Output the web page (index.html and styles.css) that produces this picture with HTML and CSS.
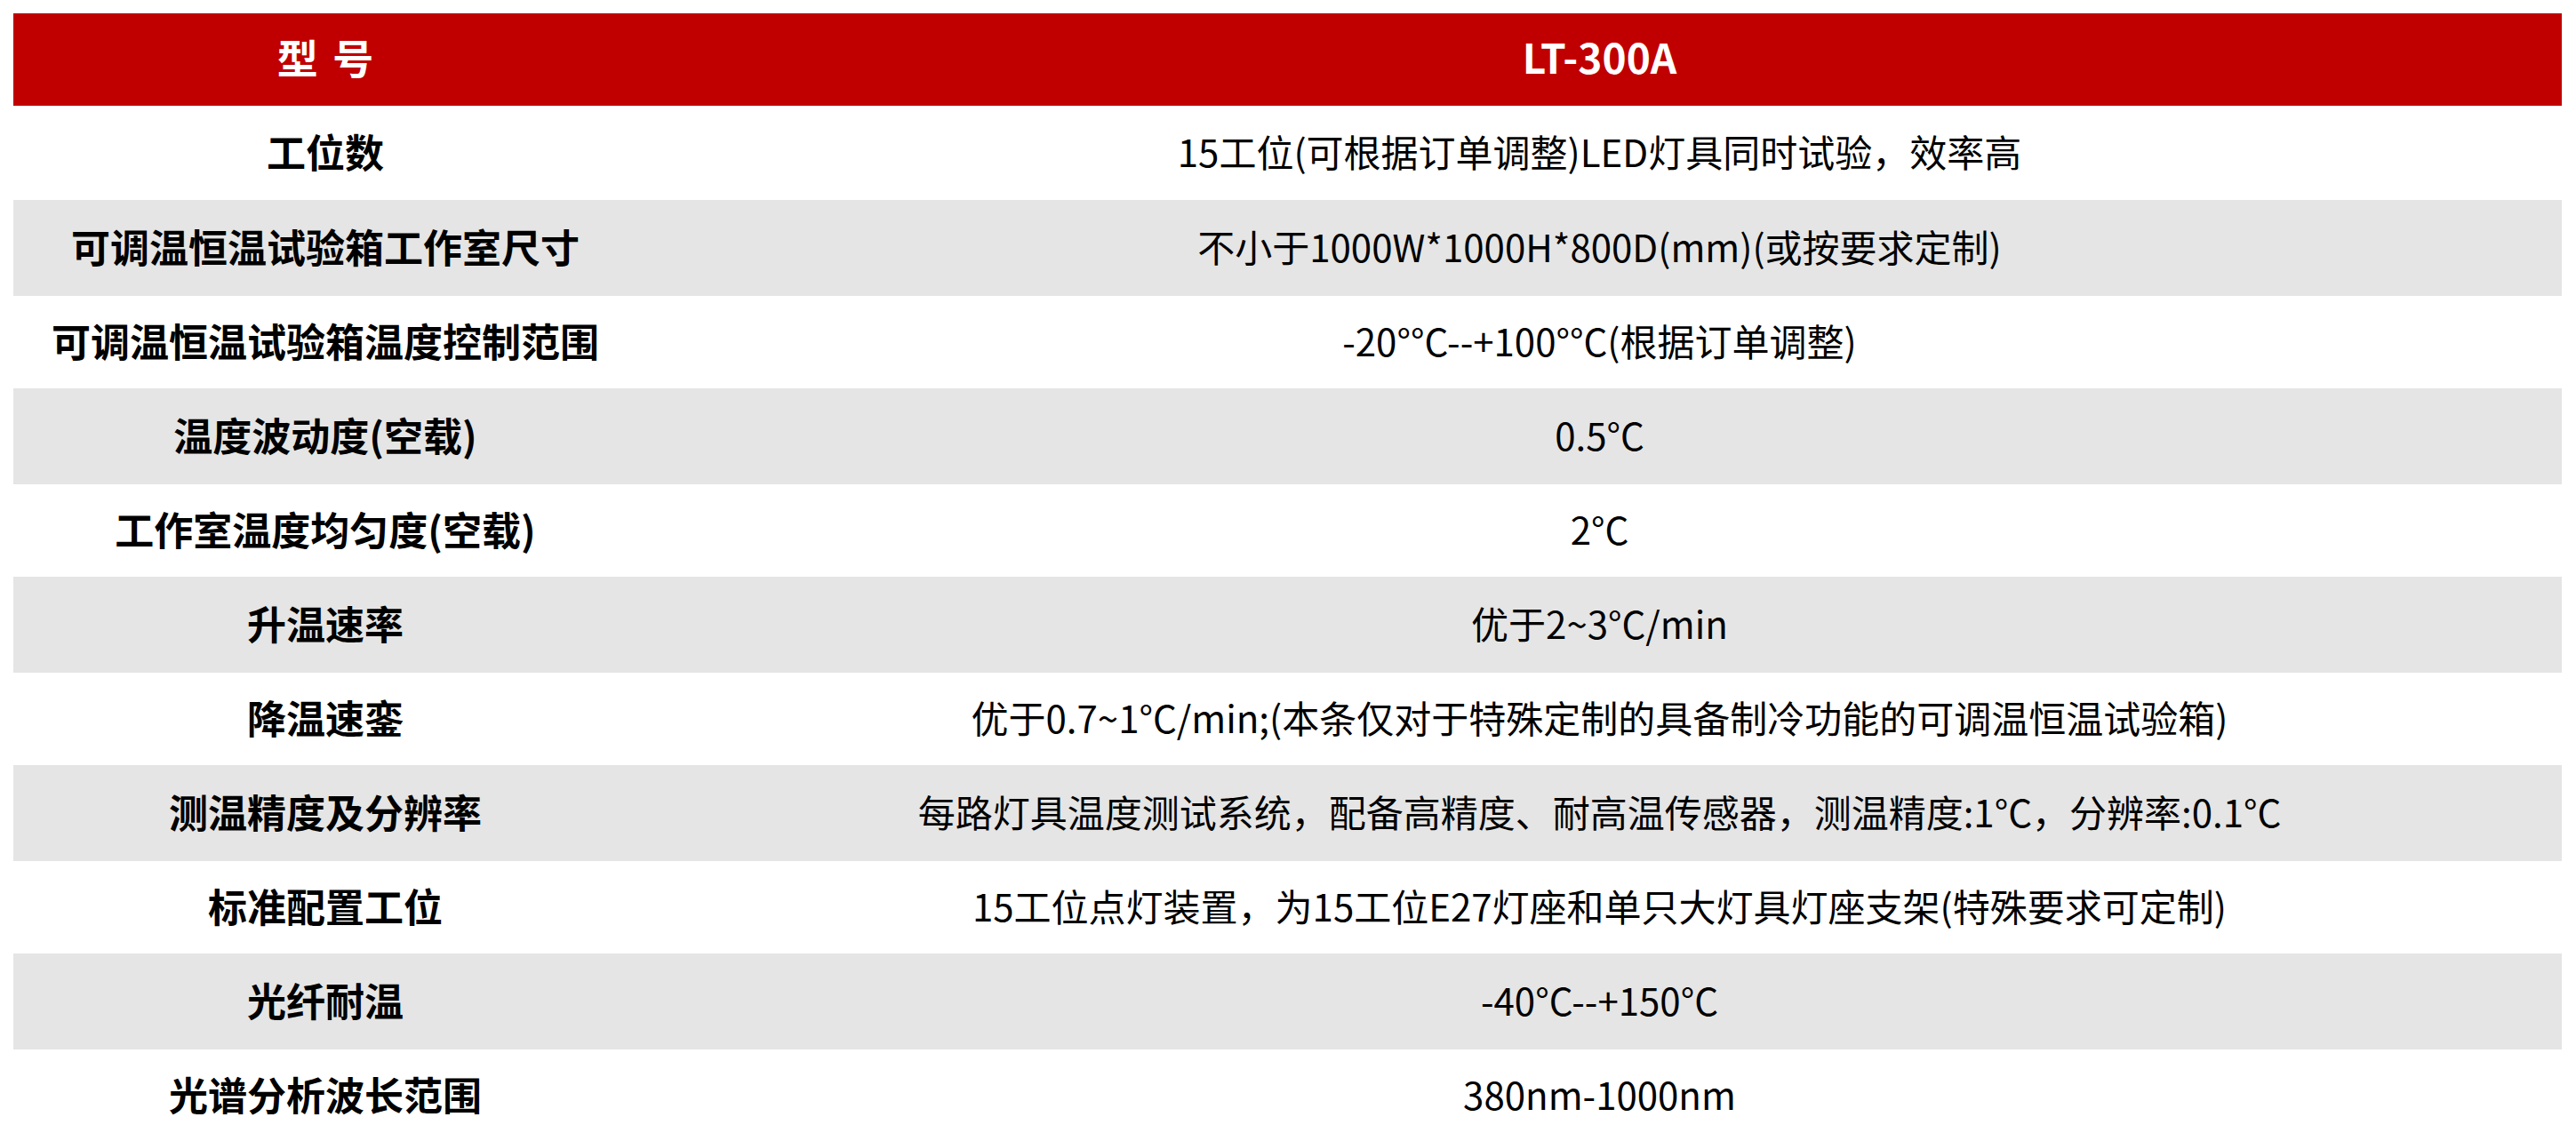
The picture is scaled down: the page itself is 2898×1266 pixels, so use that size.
FILE: index.html
```html
<!DOCTYPE html>
<html lang="zh-CN">
<head>
<meta charset="utf-8">
<title>LT-300A 参数</title>
<link rel="stylesheet" href="styles.css">
</head>
<body>
<div class="spec">
  <div class="row head">
    <div class="cell label">型 号</div>
    <div class="cell value">LT-300A</div>
  </div>
  <div class="row first">
    <div class="cell label">工位数</div>
    <div class="cell value">15工位(可根据订单调整)LED灯具同时试验，效率高</div>
  </div>
  <div class="row alt">
    <div class="cell label">可调温恒温试验箱工作室尺寸</div>
    <div class="cell value">不小于1000W*1000H*800D(mm)(或按要求定制)</div>
  </div>
  <div class="row">
    <div class="cell label">可调温恒温试验箱温度控制范围</div>
    <div class="cell value">-20°°C--+100°°C(根据订单调整)</div>
  </div>
  <div class="row alt">
    <div class="cell label">温度波动度(空载)</div>
    <div class="cell value">0.5°C</div>
  </div>
  <div class="row">
    <div class="cell label">工作室温度均匀度(空载)</div>
    <div class="cell value">2°C</div>
  </div>
  <div class="row alt">
    <div class="cell label">升温速率</div>
    <div class="cell value">优于2~3°C/min</div>
  </div>
  <div class="row">
    <div class="cell label">降温速銮</div>
    <div class="cell value">优于0.7~1°C/min;(本条仅对于特殊定制的具备制冷功能的可调温恒温试验箱)</div>
  </div>
  <div class="row alt">
    <div class="cell label">测温精度及分辨率</div>
    <div class="cell value">每路灯具温度测试系统，配备高精度、耐高温传感器，测温精度:1°C，分辨率:0.1°C</div>
  </div>
  <div class="row">
    <div class="cell label">标准配置工位</div>
    <div class="cell value">15工位点灯装置，为15工位E27灯座和单只大灯具灯座支架(特殊要求可定制)</div>
  </div>
  <div class="row alt">
    <div class="cell label">光纤耐温</div>
    <div class="cell value">-40°C--+150°C</div>
  </div>
  <div class="row">
    <div class="cell label">光谱分析波长范围</div>
    <div class="cell value">380nm-1000nm</div>
  </div>
</div>
</body>
</html>
```
FILE: styles.css
```css
html, body {
  background: #ffffff;
}
body {
  margin: 15px 16px 15px 15px;
  font-family: "Noto Sans CJK SC", "Noto Sans", sans-serif;
  color: #000000;
}
.spec {
  display: flex;
  flex-direction: column;
}
.row {
  display: grid;
  grid-template-columns: 702px 1fr;
  height: 104px;
  background: #ffffff;
}
.row.first {
  height: 106px;
}
.row.alt {
  height: 108px;
  background: #e5e5e5;
}
.row.head {
  height: 104px;
  background: #c00000;
  color: #ffffff;
}
.cell {
  display: flex;
  align-items: center;
  justify-content: center;
  line-height: 1;
  white-space: nowrap;
  padding-bottom: 5px;
}
.label {
  font-size: 44px;
  font-weight: 700;
}
.value {
  font-size: 42px;
  font-weight: 400;
}
.head .cell {
  font-size: 46px;
  font-weight: 700;
  padding-bottom: 9px;
}
.head .label {
  word-spacing: 6px;
}
```
